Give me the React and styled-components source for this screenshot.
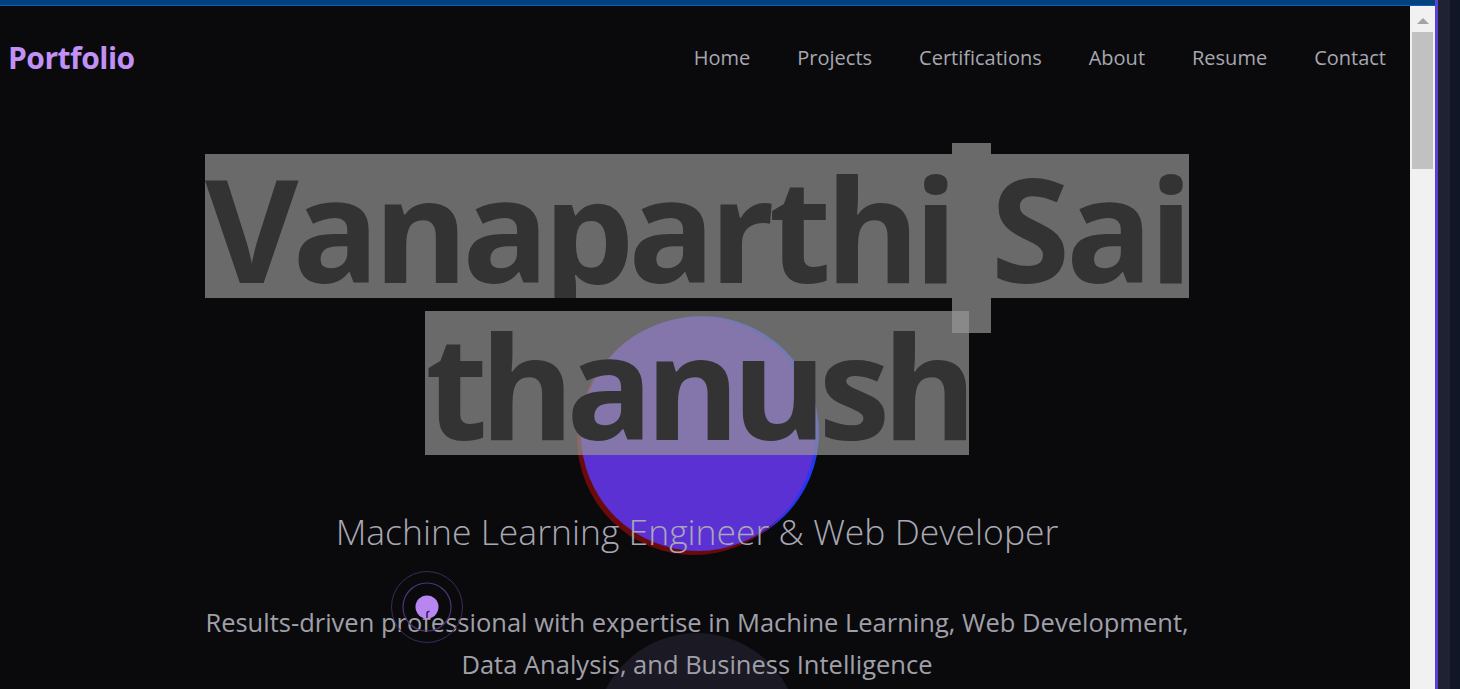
import React from 'react';
import styled, { createGlobalStyle } from 'styled-components';

const GlobalStyle = createGlobalStyle`
	html, body {
		margin: 0;
		padding: 0;
		background: #0a0a0c;
		overflow: hidden;
	}
`;

const Frame = styled.div`
	display: flex;
	flex-direction: row;
	width: 1460px;
	height: 689px;
`;

const Window = styled.div`
	display: flex;
	flex-direction: column;
	width: 1435px;
	height: 100%;
`;

const TopBar = styled.div`
	height: 5px;
	background: #01427e;
	border-bottom: 1px solid #0b5cb8;
`;

const Body = styled.div`
	display: flex;
	flex-direction: row;
	flex: 1;
	min-height: 0;
`;

const Page = styled.div`
	position: relative;
	width: 1410px;
	height: 100%;
	background: #0a0a0c;
	overflow: hidden;
	font-family: 'Open Sans', 'Noto Sans', sans-serif;
`;

const Scrollbar = styled.div`
	display: flex;
	flex-direction: column;
	align-items: center;
	width: 25px;
	padding-top: 12px;
	background: #f1f1f1;
	box-sizing: border-box;
`;

const ArrowUp = styled.div`
	width: 0;
	height: 0;
	border-left: 6px solid transparent;
	border-right: 6px solid transparent;
	border-bottom: 6px solid #a3a3a3;
`;

const Thumb = styled.div`
	width: 21px;
	height: 137px;
	margin-top: 8px;
	background: #c1c1c1;
`;

const PurpleEdge = styled.div`
	width: 3px;
	background: #5b3fd0;
`;

const Strip = styled.div`
	width: ${(p) => p.$w}px;
	background: ${(p) => p.$bg};
`;

const Nav = styled.nav`
	display: flex;
	align-items: center;
	justify-content: space-between;
	height: 102px;
	padding: 0 24px 0 8px;
	position: relative;
	z-index: 2;
`;

const Logo = styled.div`
	font-size: 30px;
	font-weight: 700;
	color: #c191f7;
	letter-spacing: -0.5px;
`;

const NavLinks = styled.ul`
	display: flex;
	gap: 47px;
	margin: 0;
	padding: 0;
	list-style: none;
`;

const NavLink = styled.li`
	font-size: 20px;
	color: #a7a7b1;
`;

const Hero = styled.section`
	position: relative;
	z-index: 1;
	display: flex;
	flex-direction: column;
	align-items: center;
	padding: 46px 16px 0 0;
`;

const Heading = styled.h1`
	display: flex;
	flex-direction: column;
	align-items: center;
	gap: 13px;
	margin: 0;
	font-size: 144px;
	font-weight: 700;
	color: #333333;
`;

const Line = styled.div`
	display: flex;
	align-items: flex-start;
	height: 144px;
`;

const Sel = styled.span`
	display: block;
	height: 144px;
	line-height: 144px;
	padding-top: 1px;
	box-sizing: border-box;
	overflow: hidden;
	background: rgba(152, 152, 152, 0.68);
	white-space: nowrap;
	letter-spacing: ${(p) => p.$ls}px;
`;

const SelSpace = styled.span`
	display: block;
	flex-shrink: 0;
	width: 39px;
	height: 190px;
	margin-top: -11px;
	background: rgba(152, 152, 152, 0.68);
`;

const Subtitle = styled.h2`
	margin: 52px 0 0 0;
	font-size: 35.5px;
	font-weight: 300;
	color: #a8a8b4;
	line-height: 48px;
`;

const Description = styled.p`
	margin: 46px 0 0 0;
	width: 1000px;
	font-size: 25.5px;
	font-weight: 400;
	line-height: 42px;
	color: #a0a0aa;
	text-align: center;
`;

const Blob = styled.div`
	position: absolute;
	left: ${(p) => p.$x - p.$r}px;
	top: ${(p) => p.$y - p.$r}px;
	width: ${(p) => p.$r * 2}px;
	height: ${(p) => p.$r * 2}px;
	border-radius: 50%;
	background: ${(p) => p.$bg};
	box-shadow: ${(p) => p.$shadow || 'none'};
	z-index: 0;
`;

const Cursor = styled.div`
	position: absolute;
	left: 391px;
	top: 565px;
	width: 72px;
	height: 72px;
	z-index: 3;
`;

const App = () => {
	const links = ['Home', 'Projects', 'Certifications', 'About', 'Resume', 'Contact'];
	return (
		<>
			<GlobalStyle />
			<Frame>
				<Window>
					<TopBar />
					<Body>
						<Page>
							<Blob
								$x={698}
								$y={428}
								$r={117}
								$bg="#5b31d4"
								$shadow="-4px 4px 0 #6a0b0b, 4px -1px 0 #2438ee"
							/>
							<Blob $x={697} $y={729} $r={102} $bg="#1b1924" />
							<Nav>
								<Logo>Portfolio</Logo>
								<NavLinks>
									{links.map((l) => (
										<NavLink key={l}>{l}</NavLink>
									))}
								</NavLinks>
							</Nav>
							<Hero>
								<Heading>
									<Line>
										<Sel $ls={-6}>Vanaparthi</Sel>
										<SelSpace />
										<Sel $ls={-4}>Sai</Sel>
									</Line>
									<Line>
										<Sel $ls={-8}>thanush</Sel>
									</Line>
								</Heading>
								<Subtitle>Machine Learning Engineer &amp; Web Developer</Subtitle>
								<Description>
									Results-driven professional with expertise in Machine Learning, Web Development,
									<br />
									Data Analysis, and Business Intelligence
								</Description>
							</Hero>
							<Cursor>
								<svg width="72" height="72" viewBox="0 0 72 72">
									<circle cx="36" cy="36" r="35.5" fill="none" stroke="#3a2c5c" strokeWidth="1" />
									<circle cx="36" cy="36" r="24" fill="none" stroke="#4b3578" strokeWidth="1.2" />
									<circle cx="36" cy="36" r="11.5" fill="#b886f0" />
									<path d="M38.5 40.5 q-2.5 -0.5 -2.5 2.5 v4" fill="none" stroke="#3a1a6a" strokeWidth="1.6" />
								</svg>
							</Cursor>
						</Page>
						<Scrollbar>
							<ArrowUp />
							<Thumb />
						</Scrollbar>
					</Body>
				</Window>
				<PurpleEdge />
				<Strip $w={12} $bg="#1f2233" />
				<Strip $w={10} $bg="#111627" />
			</Frame>
		</>
	);
};

export default App;
